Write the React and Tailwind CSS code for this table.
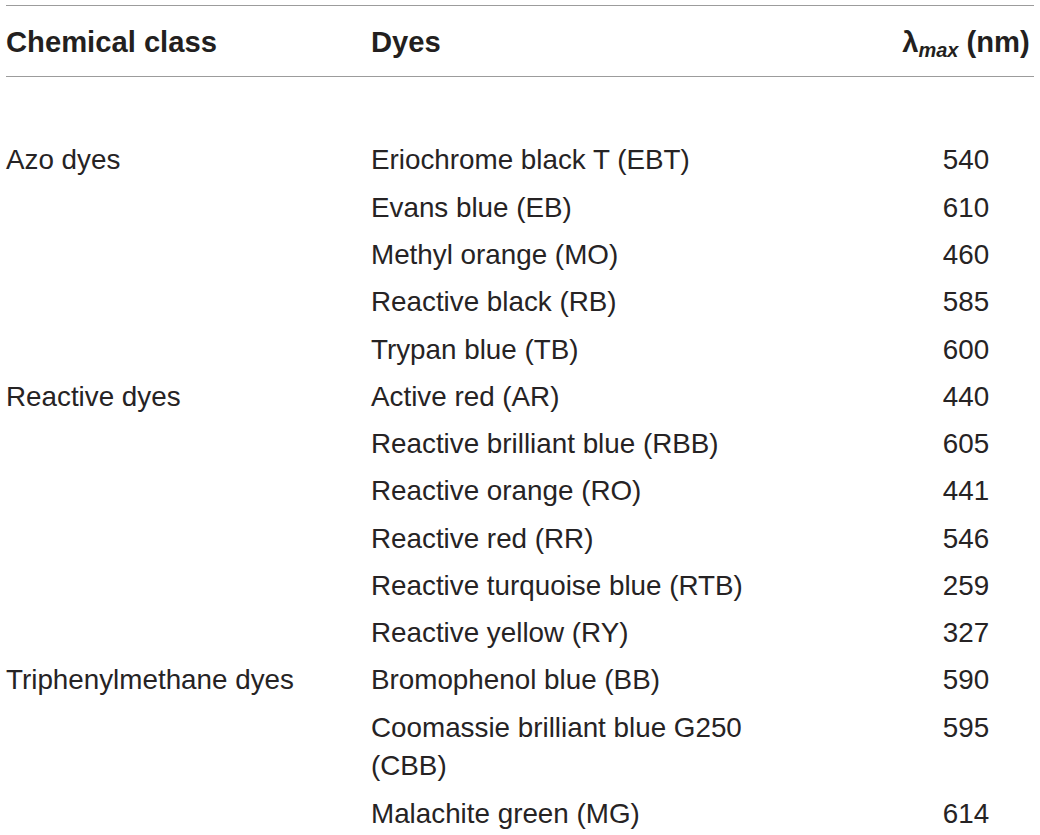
import React from 'react';

const groups = [
    {
        name: 'Azo dyes',
        dyes: [
            ['Eriochrome black T (EBT)', '540'],
            ['Evans blue (EB)', '610'],
            ['Methyl orange (MO)', '460'],
            ['Reactive black (RB)', '585'],
            ['Trypan blue (TB)', '600'],
        ],
    },
    {
        name: 'Reactive dyes',
        dyes: [
            ['Active red (AR)', '440'],
            ['Reactive brilliant blue (RBB)', '605'],
            ['Reactive orange (RO)', '441'],
            ['Reactive red (RR)', '546'],
            ['Reactive turquoise blue (RTB)', '259'],
            ['Reactive yellow (RY)', '327'],
        ],
    },
    {
        name: 'Triphenylmethane dyes',
        dyes: [
            ['Bromophenol blue (BB)', '590'],
            ['Coomassie brilliant blue G250 (CBB)', '595'],
            ['Malachite green (MG)', '614'],
        ],
    },
];

const Row = ({ cls, dye, nm }) => (
    <div className="grid grid-cols-[365px_415px_1fr] py-[4.4px]">
        <div>{cls}</div>
        <div>{dye}</div>
        <div className="flex justify-end">
            <div className="w-[136px] text-center">{nm}</div>
        </div>
    </div>
);

export default function App() {
    return (
        <div className="w-[1040px] h-[835px] overflow-hidden bg-white pt-[5px] px-[6px] text-[#231f20] font-['Liberation_Sans',Arial,sans-serif]">
            {/* header */}
            <div className="grid grid-cols-[365px_415px_1fr] border-t border-b border-[#9c9c9c] pt-[17px] pb-[14px] text-[29.2px] leading-[39px] font-bold">
                <div>Chemical class</div>
                <div>Dyes</div>
                <div className="flex justify-end">
                    <div className="w-[136px] text-center whitespace-nowrap">
                        λ<sub className="text-[20px] italic">max</sub> (nm)
                    </div>
                </div>
            </div>

            <div className="pt-[60px] text-[27.8px] leading-[38.5px] text-[#262324]">
                {groups.map((g) =>
                    g.dyes.map(([dye, nm], i) => (
                        <Row key={dye} cls={i === 0 ? g.name : ''} dye={dye} nm={nm} />
                    ))
                )}
            </div>
        </div>
    );
}
